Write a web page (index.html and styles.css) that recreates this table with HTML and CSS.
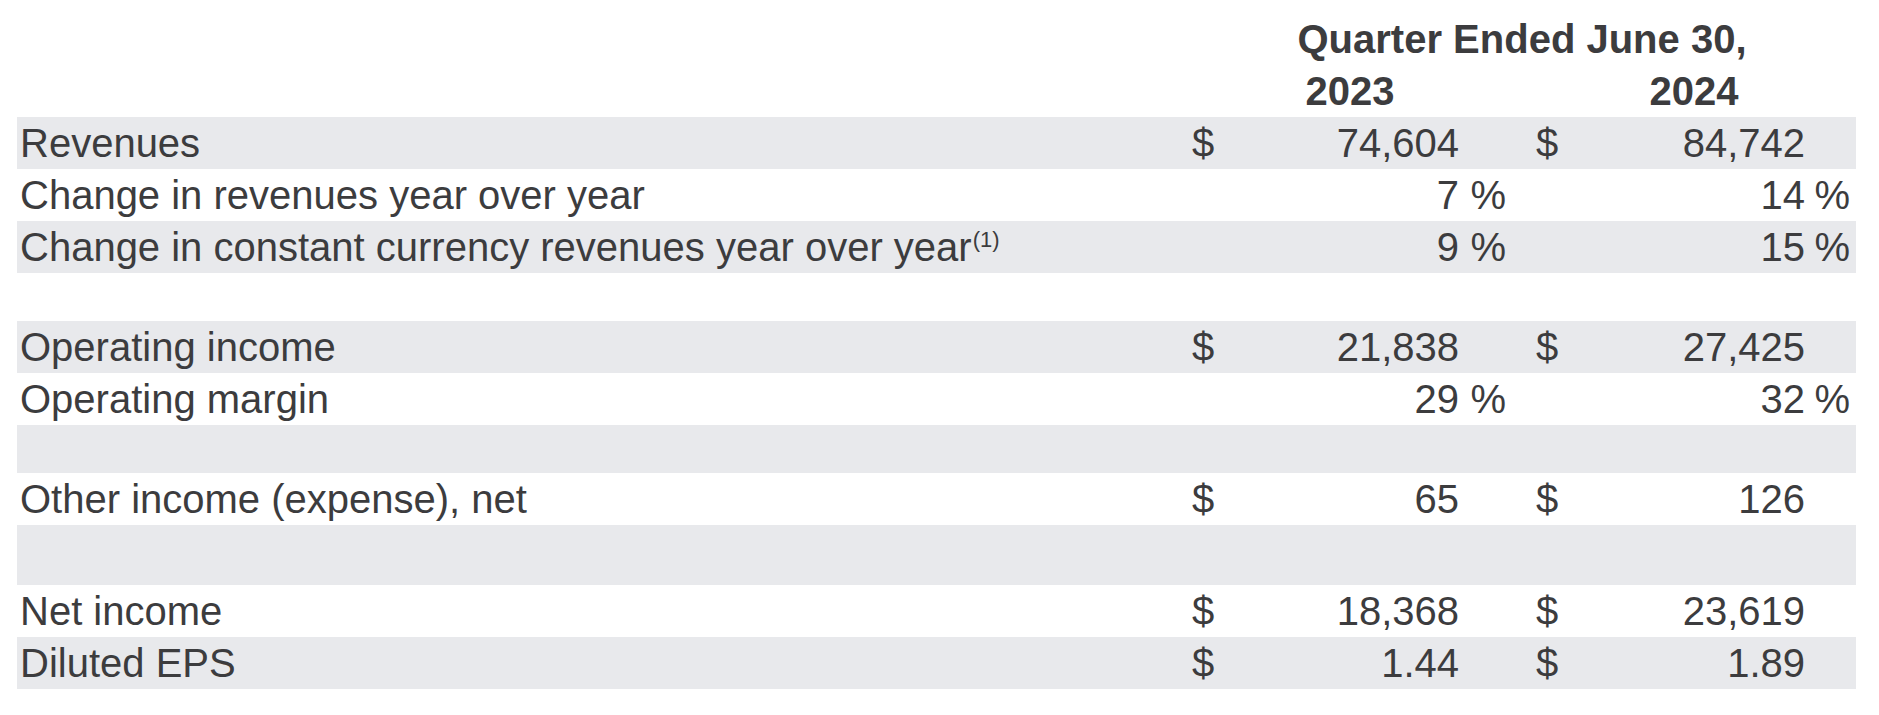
FILE: index.html
```html
<!DOCTYPE html>
<html lang="en">
<head>
<meta charset="utf-8">
<title>Quarter Ended June 30</title>
<link rel="stylesheet" href="styles.css">
</head>
<body>
<div class="fin">
  <div class="row head">
    <div class="h-span-all">Quarter Ended June 30,</div>
  </div>
  <div class="row head">
    <div class="h-span-a">2023</div>
    <div class="h-span-b">2024</div>
  </div>

  <div class="row shade">
    <div class="label">Revenues</div>
    <div class="cur">$</div><div class="num">74,604</div><div class="pct"></div>
    <div class="cur b">$</div><div class="num">84,742</div><div class="pct"></div>
  </div>
  <div class="row">
    <div class="label">Change in revenues year over year</div>
    <div class="cur"></div><div class="num">7</div><div class="pct">%</div>
    <div class="cur b"></div><div class="num">14</div><div class="pct">%</div>
  </div>
  <div class="row shade">
    <div class="label">Change in constant currency revenues year over year<sup class="fn">(1)</sup></div>
    <div class="cur"></div><div class="num">9</div><div class="pct">%</div>
    <div class="cur b"></div><div class="num">15</div><div class="pct">%</div>
  </div>
  <div class="row gap"></div>

  <div class="row shade">
    <div class="label">Operating income</div>
    <div class="cur">$</div><div class="num">21,838</div><div class="pct"></div>
    <div class="cur b">$</div><div class="num">27,425</div><div class="pct"></div>
  </div>
  <div class="row">
    <div class="label">Operating margin</div>
    <div class="cur"></div><div class="num">29</div><div class="pct">%</div>
    <div class="cur b"></div><div class="num">32</div><div class="pct">%</div>
  </div>
  <div class="row gap shade"></div>
  <div class="row">
    <div class="label">Other income (expense), net</div>
    <div class="cur">$</div><div class="num">65</div><div class="pct"></div>
    <div class="cur b">$</div><div class="num">126</div><div class="pct"></div>
  </div>
  <div class="row gap tall shade"></div>
  <div class="row">
    <div class="label">Net income</div>
    <div class="cur">$</div><div class="num">18,368</div><div class="pct"></div>
    <div class="cur b">$</div><div class="num">23,619</div><div class="pct"></div>
  </div>
  <div class="row shade">
    <div class="label">Diluted EPS</div>
    <div class="cur">$</div><div class="num">1.44</div><div class="pct"></div>
    <div class="cur b">$</div><div class="num">1.89</div><div class="pct"></div>
  </div>
</div>
</body>
</html>
```

FILE: styles.css
```css
html, body {
  margin: 0;
  padding: 0;
  background: #ffffff;
}

body {
  font-family: "Liberation Sans", Arial, sans-serif;
  color: #3c3c3e;
  font-size: 40px;
  line-height: 52px;
}

.fin {
  margin-left: 17px;
  padding-top: 13px;
  width: 1839px;
}

.row {
  display: grid;
  grid-template-columns: 1175px 68px 199px 49px 28px 68px 201px 47px 4px;
  height: 52px;
}

.shade {
  background: #e8e9ec;
}

.gap {
  height: 48px;
}

.gap.tall {
  height: 60px;
}

.label {
  grid-column: 1;
  padding-left: 3px;
  white-space: nowrap;
}

.fn {
  font-size: 22px;
  line-height: 0;
  vertical-align: 14px;
  margin-left: 1px;
}

.cur {
  grid-column: 2;
  text-align: left;
}

.cur.b {
  grid-column: 6;
}

.num {
  text-align: right;
}

.pct {
  text-align: right;
  padding-right: 2px;
}

.head {
  font-weight: bold;
}

.h-span-all {
  grid-column: 2 / 9;
  text-align: center;
}

.h-span-a {
  grid-column: 2 / 5;
  text-align: center;
}

.h-span-b {
  grid-column: 6 / 9;
  text-align: center;
}
```
